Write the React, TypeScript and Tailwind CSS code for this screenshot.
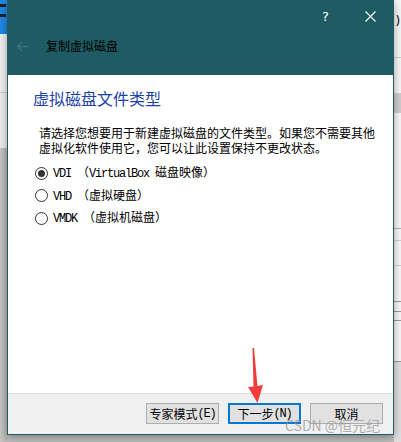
import React from 'react';

const cjk = "font-['Noto_Sans_CJK_SC',sans-serif]";
const mono = "font-['Liberation_Mono','Noto_Sans_CJK_SC',monospace] text-[12px] tracking-[-1.2px]";

const Radio: React.FC<{ checked?: boolean }> = ({ checked }) => (
    <div className="w-[13px] h-[13px] rounded-full border border-[#333] bg-white flex items-center justify-center">
        {checked && <div className="w-[7px] h-[7px] rounded-full bg-[#333]"></div>}
    </div>
);

const Option: React.FC<{ code: string; latin?: string; cn: string; checked?: boolean }> = ({ code, latin, cn, checked }) => (
    <div className="flex items-center h-[22.5px]">
        <Radio checked={checked} />
        <div className="ml-[5px] flex items-baseline text-[12px] text-black leading-[15px] whitespace-pre">
            <span className={mono}>{code + ' '}</span>
            <span className={cjk}>（</span>
            {latin && <span className={mono}>{latin + ' '}</span>}
            <span className={cjk}>{cn}）</span>
        </div>
    </div>
);

const Button: React.FC<{ label: string; hotkey: string; primary?: boolean }> = ({ label, hotkey, primary }) => (
    <div
        className={`w-[73px] h-[21px] flex items-center justify-center bg-[#e1e1e1] text-[12px] text-black ${cjk} ${
            primary ? 'border-2 border-[#0078d7]' : 'border border-[#adadad]'
        }`}
    >
        <span>{label}</span>
        {hotkey && <span className={mono}>({hotkey})</span>}
    </div>
);

export default function App() {
    return (
        <div className="w-[401px] h-[442px] relative overflow-hidden flex bg-[#bdbdbd]">
            {/* left background strip */}
            <div className="w-[7px] flex flex-col shrink-0">
                <div className="h-[34px] bg-[#1e88e5] flex flex-col gap-[7px] pt-[4px]">
                    <div className="h-[3px] w-[6px] bg-[#222]"></div>
                    <div className="h-[3px] w-[6px] bg-[#222]"></div>
                </div>
                <div className="h-[59px] bg-[#efefef] border-b border-[#c8c8c8]"></div>
                <div className="h-[55px] bg-[#ececec]"></div>
                <div className="flex-1 bg-gradient-to-r from-[#c6c6c6] to-[#b4b4b4]"></div>
            </div>

            {/* dialog */}
            <div className="w-[387px] h-[435px] shrink-0 border border-[#1e5b62] flex flex-col shadow-[0_2px_8px_rgba(0,0,0,0.35)] z-10">
                <div className="h-[74px] bg-[#1e5b62] flex flex-col">
                    <div className="h-[30px] flex items-center justify-end pr-[17px] gap-[36px] text-white">
                        <span className="font-['DejaVu_Sans',sans-serif] text-[13px] leading-none">?</span>
                        <svg width="11" height="11" viewBox="0 0 11 11">
                            <path d="M0.5 0.5 L10.5 10.5 M10.5 0.5 L0.5 10.5" stroke="white" strokeWidth="1.1" />
                        </svg>
                    </div>
                    <div className="flex items-center h-[30px] pl-[8px]">
                        <svg width="13" height="11" viewBox="0 0 13 11">
                            <path d="M12.5 5.5 H1.5 M6 1 L1.5 5.5 L6 10" stroke="#3f767c" strokeWidth="1.4" fill="none" />
                        </svg>
                        <span className={`${cjk} ml-[17px] text-[12px] text-black leading-none`}>复制虚拟磁盘</span>
                    </div>
                </div>

                <div className="flex-1 bg-white pt-[13px] pl-[25px]">
                    <h2 className={`${cjk} text-[16px] leading-[20px] text-[#1d43a8]`}>虚拟磁盘文件类型</h2>
                    <p className={`${cjk} mt-[17px] ml-[6px] text-[12px] leading-[15px] text-black w-[340px]`}>
                        请选择您想要用于新建虚拟磁盘的文件类型。如果您不需要其他虚拟化软件使用它，您可以让此设置保持不更改状态。
                    </p>
                    <div className="mt-[7px] ml-[2px] flex flex-col">
                        <Option code="VDI" latin="VirtualBox" cn="磁盘映像" checked />
                        <Option code="VHD" cn="虚拟硬盘" />
                        <Option code="VMDK" cn="虚拟机磁盘" />
                    </div>
                </div>

                <div className="h-[41px] bg-[#f0f0f0] border-t border-[#dcdcdc] flex justify-end gap-[9px] pt-[9px] pr-[10px]">
                    <Button label="专家模式" hotkey="E" />
                    <Button label="下一步" hotkey="N" primary />
                    <Button label="取消" hotkey="" />
                </div>
            </div>

            {/* right background strip */}
            <div className="flex-1 bg-[#f6f6f6] flex flex-col">
                <div className="h-[58px] border-b border-[#cfcfcf] pl-[2px] text-[12px] leading-[40px]">)</div>
                <div className="h-[35px]"></div>
                <div className="h-[20px] bg-[#cdcdcd]"></div>
                <div className="h-[116px] border-b border-[#b0b0b0]"></div>
                <div className="h-[12px] border-b border-[#d0d0d0]"></div>
                <div className="h-[25px] border-b border-[#d0d0d0]"></div>
                <div className="h-[36px] border-b border-[#9a9a9a]"></div>
                <div className="h-[10px] border-b border-[#9a9a9a]"></div>
                <div className="h-[9px] border-b border-[#9a9a9a]"></div>
                <div className="h-[41px] border-b border-[#9a9a9a]"></div>
                <div className="flex-1 bg-[#dedede]"></div>
            </div>

            {/* red annotation arrow */}
            <svg className="absolute left-[244px] top-[346px] z-20" width="24" height="60" viewBox="0 0 24 60">
                <path d="M8.5 2 L10 2 L13.5 40 L19 39 L13.5 57 L4 41 L9.5 40.5 Z" fill="#f23d3d" />
            </svg>

            {/* watermark */}
            <div className={`absolute left-[285px] top-[416px] z-20 text-[14px] leading-[18px] text-[rgba(150,150,150,0.75)] ${cjk}`}>
                CSDN @恒元纪
            </div>
        </div>
    );
}
